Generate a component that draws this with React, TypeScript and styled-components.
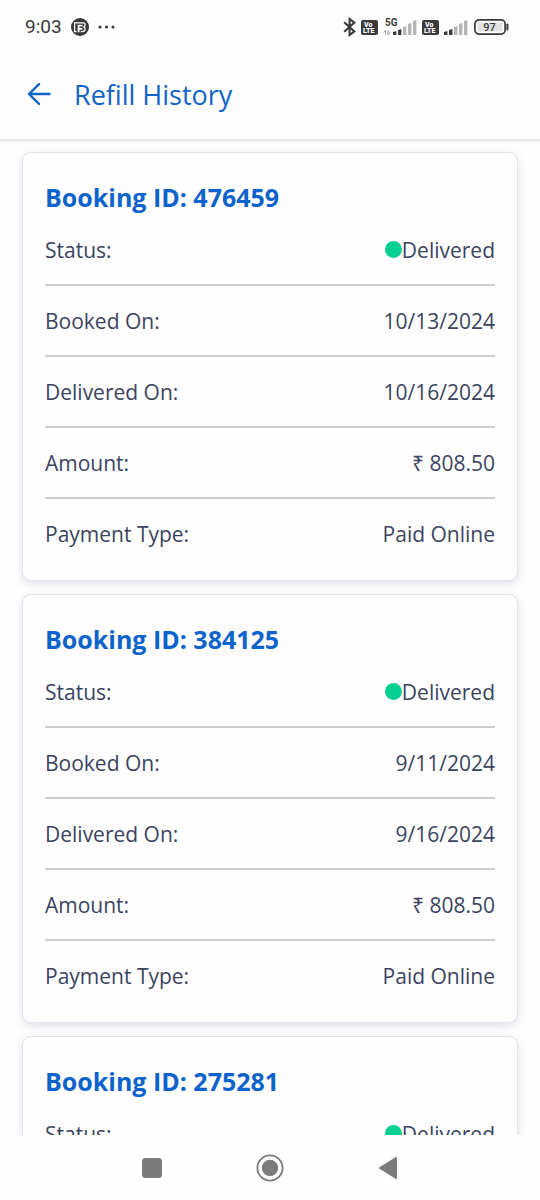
import React from "react";
import styled, { createGlobalStyle } from "styled-components";

const GlobalStyle = createGlobalStyle`
  *, *::before, *::after { box-sizing: border-box; }
  body { margin: 0; background: #fefefe; }
`;

const Screen = styled.div`
  display: flex;
  flex-direction: column;
  height: 100vh;
  background: #fefefe;
  color: #3a4460;
  font-family: "Open Sans", "Noto Sans", sans-serif;
`;

const StatusBar = styled.div`
  display: flex;
  flex: none;
  align-items: center;
  justify-content: space-between;
  height: 54px;
  padding: 0 31px 0 25px;
  color: #3a3a3a;
  font-family: Roboto, sans-serif;
`;

const StatusGroup = styled.div<{ $gap: number }>`
  display: flex;
  align-items: center;
  gap: ${(p) => p.$gap}px;

  svg {
    display: block;
    flex: none;
  }
`;

const Clock = styled.time`
  font-size: 19px;
  line-height: 24px;
`;

const Header = styled.header`
  display: flex;
  flex: none;
  align-items: center;
  gap: 20px;
  height: 87px;
  padding: 0 24px 4px;
  border-bottom: 2px solid #e8e9ea;
  box-shadow: 0 1px 3px rgba(40, 50, 70, 0.05);
`;

const BackButton = styled.button`
  display: flex;
  align-items: center;
  justify-content: center;
  width: 30px;
  height: 30px;
  padding: 0;
  border: 0;
  background: none;
  color: #1064c8;
  cursor: pointer;
`;

const PageTitle = styled.h1`
  margin: 0;
  color: #1064c8;
  font-size: 27px;
  font-weight: 400;
  line-height: 36px;
`;

const History = styled.main`
  display: flex;
  flex: 1;
  flex-direction: column;
  gap: 13px;
  min-height: 0;
  padding: 11px 22px;
  overflow-y: auto;
  scrollbar-width: none;
`;

const Card = styled.article`
  flex: none;
  padding: 26px 22px 10px;
  border: 1px solid #dfe3ea;
  border-radius: 9px;
  background: #fefefe;
  box-shadow: 0 3px 8px rgba(60, 75, 120, 0.16);
`;

const BookingTitle = styled.h2`
  margin: 0;
  color: #0b63cb;
  font-size: 25px;
  font-weight: 700;
  line-height: 36px;
`;

const Details = styled.dl`
  margin: 0;
`;

const Row = styled.div`
  display: flex;
  align-items: center;
  justify-content: space-between;
  height: 71px;
  border-bottom: 2px solid #cbced3;
  font-size: 21px;
  line-height: 30px;

  &:last-child {
    border-bottom-color: transparent;
  }
`;

const Label = styled.dt`
  margin: 0;
`;

const Value = styled.dd`
  display: flex;
  align-items: center;
  margin: 0;
`;

const StatusDot = styled.span`
  width: 17px;
  height: 17px;
  border-radius: 50%;
  background: #08d092;
`;

const NavBar = styled.nav`
  display: flex;
  flex: none;
  align-items: center;
  justify-content: center;
  gap: 78px;
  height: 65px;
  background: #fefefe;
`;

const NavButton = styled.button`
  display: flex;
  align-items: center;
  justify-content: center;
  width: 40px;
  height: 40px;
  padding: 0;
  border: 0;
  background: none;
  color: #7b7b7b;
  cursor: pointer;
`;

const AppBadge = () => (
  <svg width="18" height="18" viewBox="0 0 18 18" aria-hidden="true">
    <circle cx="9" cy="9" r="9" fill="#3a3a3a" />
    <g fill="none" stroke="#fefefe">
      <path d="M5.6 13.6H3.6V4.8H12.4Q14.4 5 14 7.2Q13.8 8.2 13 8.9Q14.4 9.8 14 11.8Q13.4 13.6 11.4 13.6H9.6" strokeWidth="1.3" />
      <path d="M7.6 14.2V7.6H11.6M7.6 10.8H11.4" strokeWidth="1.8" />
    </g>
  </svg>
);

const MoreDots = () => (
  <svg width="17" height="4" viewBox="0 0 17 4" fill="#3a3a3a" aria-hidden="true">
    <circle cx="2" cy="2" r="1.6" />
    <circle cx="8.5" cy="2" r="1.6" />
    <circle cx="15" cy="2" r="1.6" />
  </svg>
);

const Bluetooth = () => (
  <svg width="13" height="20" viewBox="0 0 13 20" fill="none" stroke="#3a3a3a" strokeWidth="2.1" aria-hidden="true">
    <path d="M1.2 5.2 11.4 14.4 6.6 18V2L11.4 5.6 1.2 14.8" />
  </svg>
);

const VolteBadge = () => (
  <svg width="17" height="15" viewBox="0 0 17 15" fontFamily="Roboto, sans-serif" fontWeight="900" fill="#fefefe">
    <rect width="17" height="15" rx="2" fill="#3a3a3a" />
    <text x="3" y="7" fontSize="7">Vo</text>
    <text x="2" y="13" fontSize="7">LTE</text>
  </svg>
);

const barHeights = [4, 6, 9, 12, 15];

const SignalBars = ({ x }: { x: number }) => (
  <>
    {barHeights.map((h, i) => (
      <path
        key={h}
        d={`M${x + i * 5} ${17 - h + 1}L${x + i * 5 + 3.4} ${17 - h}V17H${x + i * 5}Z`}
        fill={i < 2 ? "#3a3a3a" : "#b5b5b5"}
      />
    ))}
  </>
);

const MobileNetwork = () => (
  <svg width="34" height="19" viewBox="0 0 34 19">
    <SignalBars x={10} />
    <text x="2" y="8" fontFamily="Roboto, sans-serif" fontSize="10" fontWeight="700" fill="#3a3a3a">
      5G
    </text>
    <path d="M0.5 14.5 2.5 12V17M7 14 5 17V12" fill="none" stroke="#a5a5a5" />
  </svg>
);

const SecondSignal = () => (
  <svg width="25" height="19" viewBox="0 0 25 19" aria-hidden="true">
    <SignalBars x={0} />
  </svg>
);

const Battery = () => (
  <svg width="35" height="16" viewBox="0 0 35 16">
    <rect x="0.9" y="0.9" width="30.2" height="14.2" rx="4" fill="#fefefe" stroke="#3a3a3a" strokeWidth="1.7" />
    <rect x="3.5" y="3.5" width="25" height="9" rx="1.5" fill="#e2e2e2" />
    <path d="M33.4 5.5V10.5" stroke="#3a3a3a" strokeWidth="2" strokeLinecap="round" />
    <text x="15.5" y="12" textAnchor="middle" fontFamily="Roboto, sans-serif" fontSize="11" fontWeight="500" fill="#3a3a3a">
      97
    </text>
  </svg>
);

const BackArrow = () => (
  <svg width="24" height="24" viewBox="0 0 24 24" fill="none" stroke="currentColor" strokeWidth="2.4" strokeLinecap="round" strokeLinejoin="round" aria-hidden="true">
    <path d="M22.5 11H2M12 1.2 2 11 12 20.8" />
  </svg>
);

interface Booking {
  id: string;
  bookedOn: string;
  deliveredOn: string;
  amount: string;
  payment: string;
}

const bookings: Booking[] = [
  { id: "476459", bookedOn: "10/13/2024", deliveredOn: "10/16/2024", amount: "₹ 808.50", payment: "Paid Online" },
  { id: "384125", bookedOn: "9/11/2024", deliveredOn: "9/16/2024", amount: "₹ 808.50", payment: "Paid Online" },
  { id: "275281", bookedOn: "", deliveredOn: "", amount: "", payment: "" },
];

const BookingCard = ({ booking }: { booking: Booking }) => (
  <Card>
    <BookingTitle>Booking ID: {booking.id}</BookingTitle>
    <Details>
      <Row>
        <Label>Status:</Label>
        <Value>
          <StatusDot />
          Delivered
        </Value>
      </Row>
      {booking.bookedOn && (
        <>
          <Row>
            <Label>Booked On:</Label>
            <Value>{booking.bookedOn}</Value>
          </Row>
          <Row>
            <Label>Delivered On:</Label>
            <Value>{booking.deliveredOn}</Value>
          </Row>
          <Row>
            <Label>Amount:</Label>
            <Value>{booking.amount}</Value>
          </Row>
          <Row>
            <Label>Payment Type:</Label>
            <Value>{booking.payment}</Value>
          </Row>
        </>
      )}
    </Details>
  </Card>
);

export default function App() {
  return (
    <Screen>
      <GlobalStyle />
      <StatusBar>
        <StatusGroup $gap={9}>
          <Clock>9:03</Clock>
          <AppBadge />
          <MoreDots />
        </StatusGroup>
        <StatusGroup $gap={5}>
          <Bluetooth />
          <VolteBadge />
          <MobileNetwork />
          <VolteBadge />
          <SecondSignal />
          <Battery />
        </StatusGroup>
      </StatusBar>
      <Header>
        <BackButton type="button" aria-label="Back">
          <BackArrow />
        </BackButton>
        <PageTitle>Refill History</PageTitle>
      </Header>
      <History>
        {bookings.map((booking) => (
          <BookingCard key={booking.id} booking={booking} />
        ))}
      </History>
      <NavBar>
        <NavButton type="button" aria-label="Recent apps">
          <svg width="20" height="20" viewBox="0 0 20 20" fill="currentColor">
            <rect width="20" height="20" rx="3.5" />
          </svg>
        </NavButton>
        <NavButton type="button" aria-label="Home">
          <svg width="28" height="28" viewBox="0 0 28 28">
            <circle cx="14" cy="14" r="12.6" fill="none" stroke="currentColor" strokeWidth="1.8" />
            <circle cx="14" cy="14" r="8.2" fill="currentColor" />
          </svg>
        </NavButton>
        <NavButton type="button" aria-label="Back">
          <svg width="20" height="24" viewBox="0 0 20 24" fill="currentColor" stroke="currentColor" strokeWidth="2" strokeLinejoin="round">
            <path d="M18 2V22L2 12Z" />
          </svg>
        </NavButton>
      </NavBar>
    </Screen>
  );
}
